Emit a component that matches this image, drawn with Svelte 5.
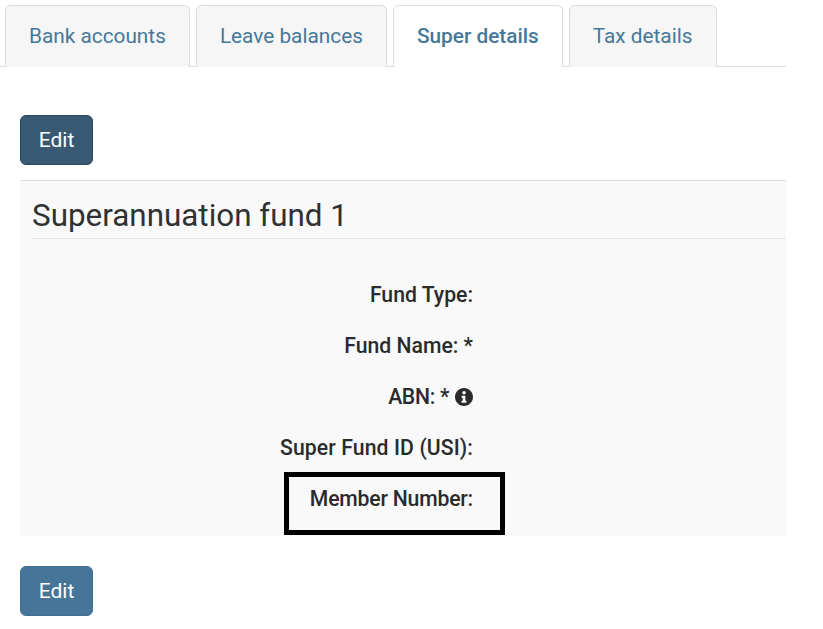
<script>
  const tabs = [
    { label: 'Bank accounts' },
    { label: 'Leave balances' },
    { label: 'Super details', active: true },
    { label: 'Tax details' }
  ];
</script>

<div class="page">
  <ul class="tabs">
    {#each tabs as tab}
      <li class="tab" class:active={tab.active}>{tab.label}</li>
    {/each}
  </ul>

  <div class="content">
    <button class="btn btn-dark">Edit</button>

    <section class="panel">
      <h2>Superannuation fund 1</h2>
      <dl class="fields">
        <dt>Fund Type:</dt>
        <dt>Fund Name: *</dt>
        <dt class="abn">
          ABN: *
          <svg class="info" viewBox="8 8 496 496" aria-hidden="true">
            <path fill-rule="evenodd" d="M256 8C119 8 8 119 8 256s111 248 248 248 248-111 248-248S393 8 256 8zm2 84c27 0 48 21 48 48s-21 48-48 48-48-21-48-48 21-48 48-48zm66 308c0 7-5 12-12 12H200c-7 0-12-5-12-12v-30c0-7 5-12 12-12h20v-82h-20c-7 0-12-5-12-12v-30c0-7 5-12 12-12h82c7 0 12 5 12 12v124h18c7 0 12 5 12 12v30z" />
          </svg>
        </dt>
        <dt class="wide">Super Fund ID (USI):</dt>
        <dt class="marked">Member Number:<span class="highlight"></span></dt>
      </dl>
    </section>

    <button class="btn btn-light">Edit</button>
  </div>
</div>

<style>
  :global(body) {
    margin: 0;
    background: #fff;
    font-family: Roboto, "Liberation Sans", sans-serif;
    color: #292b2c;
  }

  .page {
    width: 786px;
    padding-top: 5px;
  }

  .tabs {
    display: flex;
    gap: 6px;
    height: 62px;
    margin: 0;
    padding: 0 0 0 5px;
    list-style: none;
    border-bottom: 1px solid #ddd;
    box-sizing: border-box;
  }

  .tab {
    height: 62px;
    box-sizing: border-box;
    padding: 0 23px;
    border: 1px solid #ddd;
    border-bottom: none;
    border-radius: 6px 6px 0 0;
    background: #f6f6f6;
    color: #46789a;
    font-size: 20.800px;
    line-height: 60px;
  }

  .tab.active {
    background: #fff;
    font-weight: 500;
  }

  .content {
    padding: 48px 0 0 20px;
  }

  .btn {
    display: block;
    width: 73px;
    height: 50px;
    padding: 0;
    border-radius: 6px;
    color: #fff;
    font-family: inherit;
    font-size: 21px;
  }

  .btn-dark {
    background: #375a72;
    border: 1px solid #2a475b;
  }

  .btn-light {
    background: #46759a;
    border: 1px solid #41708f;
  }

  .panel {
    margin: 15px 0 30px;
    height: 356px;
    box-sizing: border-box;
    border-top: 1px solid #ddd;
    background: #f9f9f9;
    padding-left: 12px;
  }

  h2 {
    margin: 0;
    height: 58px;
    box-sizing: border-box;
    border-bottom: 1px solid #e3e3e3;
    font-size: 31.400px;
    font-weight: 400;
    line-height: 70px;
    color: #2f3133;
  }

  .fields {
    width: 441px;
    margin: 44px 0 0;
    display: flex;
    flex-direction: column;
    gap: 27px;
  }

  dt {
    height: 24px;
    line-height: 24px;
    text-align: right;
    font-size: 21.200px;
    font-weight: 500;
    position: relative;
  }

  .abn {
    letter-spacing: -0.3px;
  }

  .wide {
    letter-spacing: 0.1px;
  }

  .marked {
    letter-spacing: -0.2px;
  }

  .info {
    width: 18px;
    height: 18px;
    fill: #292b2c;
    vertical-align: -2px;
    margin-left: 1px;
  }

  .highlight {
    position: absolute;
    right: -32px;
    top: -15px;
    width: 221px;
    height: 63px;
    box-sizing: border-box;
    border: 5px solid #000;
  }
</style>
